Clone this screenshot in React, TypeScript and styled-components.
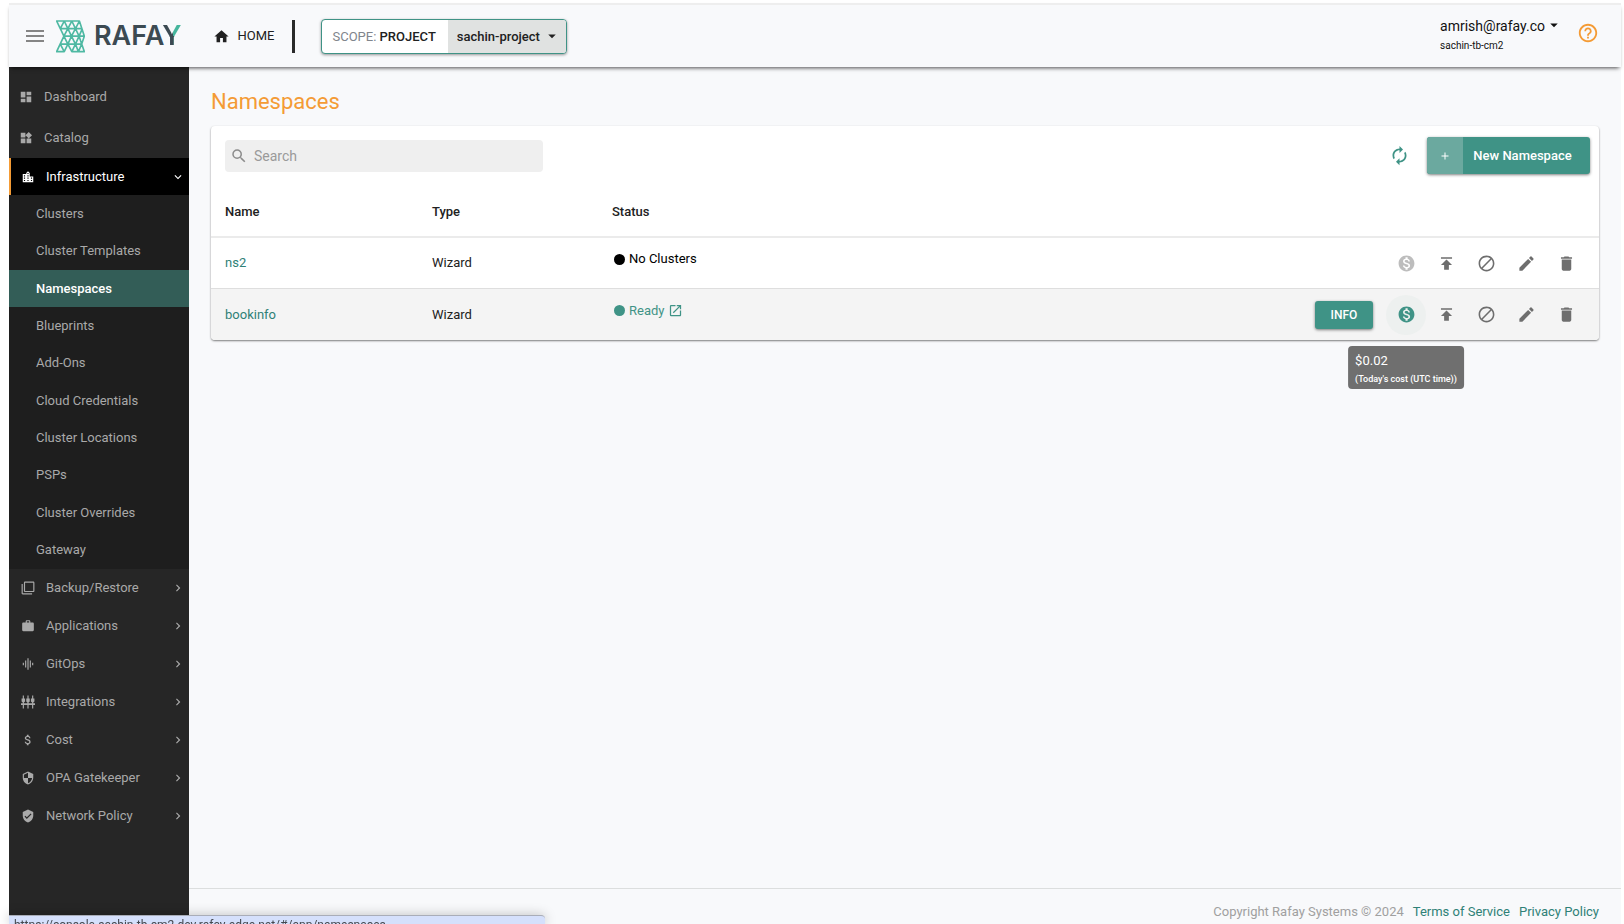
import React from "react";
import styled, { createGlobalStyle } from "styled-components";
import {
  MdDashboard, MdWidgets, MdLocationCity, MdFilterNone, MdWork, MdGraphicEq, MdAttachMoney,
  MdSecurity, MdVerifiedUser, MdHome, MdMenu, MdHelpOutline, MdAutorenew, MdSearch,
  MdMonetizationOn, MdPublish, MdBlock, MdEdit, MdDelete, MdArrowDropDown, MdChevronRight,
  MdExpandMore, MdAdd, MdOpenInNew,
} from "react-icons/md";

const teal = "#3f9386";
const orange = "#f49b35";

const GlobalStyle = createGlobalStyle`
  * { box-sizing: border-box; }
  body { margin: 0; background: #fff; font-family: Roboto, "Liberation Sans", sans-serif; font-size: 13px; line-height: 20px; color: #212121; }
  button, input, select { font: inherit; color: inherit; }
  a { text-decoration: none; }
  svg { display: block; flex: none; }
`;

const Page = styled.div`
  min-height: 100vh;
  padding: 3px 3px 0 9px;
  display: flex;
  flex-direction: column;
`;

const Header = styled.header`
  position: relative;
  z-index: 1;
  display: flex;
  align-items: center;
  height: 64px;
  padding: 0 22px 0 14px;
  background: #f8f9fb;
  border-top: 2px solid #eeeeee;
  box-shadow: 0 3px 4px -2px rgba(0, 0, 0, 0.7);
`;

const MenuButton = styled.button`
  display: flex;
  padding: 0;
  border: 0;
  background: none;
  color: #858585;
`;

const Brand = styled.a`
  display: flex;
  align-items: center;
  gap: 9px;
  margin-left: 9px;
  color: #3c4a52;
  font: 600 27px/32px Inter, sans-serif;
`;

const BrandTail = styled.span`
  color: transparent;
  background: linear-gradient(#3c4a52, #3c4a52) 0 100% / 100% 16px no-repeat,
    linear-gradient(90deg, #3c4a52 54%, #45b59c 54%);
  -webkit-background-clip: text;
  background-clip: text;
`;

const HomeLink = styled.a`
  display: flex;
  align-items: center;
  gap: 8px;
  margin-left: 31px;
  color: #212121;
`;

const Divider = styled.span`
  width: 3px;
  height: 33px;
  margin: 0 26px 0 18px;
  background: #2a2a2a;
`;

const Scope = styled.label`
  display: flex;
  height: 35px;
  overflow: hidden;
  border: 1px solid ${teal};
  border-radius: 4px;
  background: #fff;
  box-shadow: 0 1px 3px rgba(0, 0, 0, 0.4);
  line-height: 33px;
`;

const ScopeName = styled.span`
  padding: 0 12px 0 10px;
  color: #80858c;
  b { font-weight: 500; color: #212121; }
`;

const ScopePicker = styled.span`
  display: flex;
  align-items: center;
  padding-right: 5px;
  background: #e0e2e1;
`;

const ScopeSelect = styled.select`
  appearance: none;
  height: 33px;
  padding: 0 2px 0 9px;
  border: 0;
  background: transparent;
  font-weight: 500;
`;

const UserArea = styled.div`
  display: flex;
  align-items: flex-start;
  gap: 14px;
  margin-left: auto;
`;

const Account = styled.button`
  display: flex;
  align-items: flex-start;
  padding: 0;
  border: 0;
  background: none;
  text-align: left;
  font-size: 14px;
  color: #111;
`;

const AccountText = styled.span`
  display: flex;
  flex-direction: column;
  small { font-size: 10px; }
`;

const HelpLink = styled.a`
  padding-top: 6px;
  color: ${orange};
`;

const Body = styled.div`
  flex: 1;
  display: flex;
`;

const Sidebar = styled.nav`
  flex: none;
  width: 180px;
  padding-top: 9px;
  background: #262626;
`;

const NavLink = styled.a<{ $wide?: boolean; $open?: boolean }>`
  display: flex;
  align-items: center;
  gap: 11px;
  height: ${(p) => (p.$wide ? 41 : p.$open ? 37 : 38)}px;
  padding: 0 4px 0 ${(p) => (p.$wide || p.$open ? 10 : 12)}px;
  color: ${(p) => (p.$open ? "#fff" : "#a9a9a9")};
  background: ${(p) => (p.$open ? "#000" : "none")};
  border-left: ${(p) => (p.$open ? `2px solid ${orange}` : "0")};
  > :last-child:not(:nth-child(2)) { margin-left: auto; }
`;

const SubMenu = styled.ul`
  display: flex;
  flex-direction: column;
  justify-content: space-between;
  min-height: 374px;
  margin: 0;
  padding: 0 0 1px;
  list-style: none;
  background: #1e1e1e;
`;

const SubLink = styled.a<{ $active?: boolean }>`
  display: block;
  padding-left: 27px;
  line-height: 37px;
  color: ${(p) => (p.$active ? "#fff" : "#a9a9a9")};
  font-weight: ${(p) => (p.$active ? 500 : 400)};
  background: ${(p) => (p.$active ? "#335d57" : "none")};
`;

const Main = styled.div`
  flex: 1;
  min-width: 0;
  display: flex;
  flex-direction: column;
  background: #f8f9fb;
`;

const Content = styled.main`
  flex: 1;
  padding: 21px 22px;
`;

const Title = styled.h1`
  margin: 0 0 10px;
  font-size: 22px;
  line-height: 28px;
  font-weight: 400;
  color: ${orange};
`;

const Card = styled.section`
  border-radius: 4px;
  background: #fff;
  box-shadow: 0 1px 2px rgba(0, 0, 0, 0.5);
`;

const Toolbar = styled.div`
  display: flex;
  align-items: center;
  padding: 11px 9px 0 14px;
`;

const SearchBox = styled.label`
  display: flex;
  align-items: center;
  gap: 6px;
  width: 318px;
  height: 32px;
  padding: 0 5px;
  border-radius: 4px;
  background: #efefef;
  color: #8c8c8c;
`;

const SearchInput = styled.input`
  flex: 1;
  min-width: 0;
  padding: 0;
  border: 0;
  outline: 0;
  background: none;
  font-size: 14px;
  &::placeholder { color: #9a9a9a; opacity: 1; }
`;

const RefreshButton = styled.button`
  display: flex;
  margin: 0 17px 0 auto;
  padding: 0;
  border: 0;
  background: none;
  color: ${teal};
`;

const NewButton = styled.button`
  display: flex;
  align-items: stretch;
  height: 37px;
  padding: 0;
  overflow: hidden;
  border: 0;
  border-radius: 3px;
  background: ${teal};
  color: #fff;
  font-weight: 500;
  line-height: 37px;
  box-shadow: 0 1px 3px rgba(0, 0, 0, 0.5);
`;

const NewIcon = styled.span`
  display: flex;
  align-items: center;
  justify-content: center;
  width: 36px;
  background: #6ba99f;
`;

const NewLabel = styled.span`
  width: 127px;
  padding-right: 8px;
`;

const Table = styled.table`
  width: 100%;
  table-layout: fixed;
  border-collapse: separate;
  border-spacing: 0;
`;

const HeadCell = styled.th<{ $width?: number }>`
  width: ${(p) => (p.$width ? `${p.$width}px` : "auto")};
  height: 64px;
  padding: 28px 0 0 14px;
  text-align: left;
  vertical-align: top;
  font-weight: 500;
  border-bottom: 2px solid #ebebeb;
`;

const Row = styled.tr<{ $hover?: boolean }>`
  background: ${(p) => (p.$hover ? "#f4f4f4" : "#fff")};
`;

const Cell = styled.td`
  height: 51px;
  padding: 0 0 0 14px;
  tr:not(:last-child) > & { border-bottom: 1px solid #dedede; }
  tr:last-child > &:first-child { border-bottom-left-radius: 4px; }
  tr:last-child > &:last-child { border-bottom-right-radius: 4px; }
  a { color: #2f8177; }
`;

const Status = styled.span<{ $color: string }>`
  display: flex;
  align-items: center;
  gap: 4px;
  padding: 0 0 8px 2px;
  color: ${(p) => p.$color};
`;

const Dot = styled.i`
  width: 11px;
  height: 11px;
  border-radius: 50%;
  background: currentColor;
`;

const Actions = styled.div`
  display: flex;
  align-items: center;
  justify-content: flex-end;
  padding-right: 13px;
`;

const InfoButton = styled.button`
  width: 58px;
  height: 28px;
  margin-right: 13px;
  padding: 0;
  border: 0;
  border-radius: 3px;
  background: ${teal};
  color: #fff;
  font-size: 12px;
  font-weight: 500;
  box-shadow: 0 1px 3px rgba(0, 0, 0, 0.5);
`;

const IconButton = styled.button<{ $color?: string; $hover?: boolean }>`
  position: relative;
  display: flex;
  align-items: center;
  justify-content: center;
  width: 40px;
  height: 40px;
  padding: 0;
  border: 0;
  border-radius: 50%;
  background: ${(p) => (p.$hover ? "#edf0ef" : "none")};
  color: ${(p) => p.$color ?? "#6e6e6e"};
`;

const Tooltip = styled.span`
  position: absolute;
  top: 51px;
  left: 50%;
  transform: translateX(-50%);
  display: flex;
  flex-direction: column;
  padding: 5px 7px 2px;
  border-radius: 4px;
  background: #6f6f6f;
  color: #fff;
  font-size: 13px;
  line-height: 20px;
  text-align: left;
  white-space: nowrap;
  small { font-size: 9px; line-height: 16px; font-weight: 500; }
`;

const Footer = styled.footer`
  display: flex;
  justify-content: flex-end;
  gap: 9px;
  padding: 13px 22px 2px;
  border-top: 1px solid #dcdede;
  color: #a0a0a0;
  a { color: #2f8177; }
`;

const LinkPreview = styled.div`
  position: fixed;
  z-index: 2;
  left: 9px;
  bottom: 0;
  width: 536px;
  height: 9px;
  padding: 0 5px;
  overflow: hidden;
  border-top: 1px solid #a9adb8;
  border-top-right-radius: 4px;
  background: #d5e0fc;
  color: #45484f;
  font-size: 12px;
  line-height: 18px;
  white-space: nowrap;
  box-shadow: 0 0 12px rgba(0, 0, 0, 0.25);
`;

const LogoMark = () => (
  <svg width="29" height="33" viewBox="-2 -1 88 98" fill="none" stroke="#4fb9a3" strokeWidth="5" strokeLinejoin="round" aria-hidden="true">
    <path d="M0 1H69L84 47L76 71L84 94H46L34 71L23 94H0L22 47ZM11 24H78M22 47H84M11 71H76M0 1L11 24L23 1L34 24L46 1L57 24L69 1M22 47L34 24L45 47L57 24L68 47L78 24M22 47L34 71L45 47L57 71L68 47L76 71L66 94L57 71L46 94M11 71L23 94" />
  </svg>
);

const SlidersIcon = () => (
  <svg width="14" height="14" viewBox="0 0 24 24" fill="currentColor" aria-hidden="true">
    <path d="M3 1h2v5h2v5l-2 2v10H3V13l-2-2V6h2zM11 1h2v5h2v5l-2 2v10h-2V13l-2-2V6h2zM19 1h2v5h2v5l-2 2v10h-2V13l-2-2V6h2zM0 14h8v3H0zM8 14h8v3H8zM16 14h8v3h-8z" />
  </svg>
);

const subItems = [
  "Clusters", "Cluster Templates", "Namespaces", "Blueprints", "Add-Ons",
  "Cloud Credentials", "Cluster Locations", "PSPs", "Cluster Overrides", "Gateway",
];

const sections = [
  { label: "Backup/Restore", icon: <MdFilterNone size={14} /> },
  { label: "Applications", icon: <MdWork size={14} /> },
  { label: "GitOps", icon: <MdGraphicEq size={14} /> },
  { label: "Integrations", icon: <SlidersIcon /> },
  { label: "Cost", icon: <MdAttachMoney size={14} /> },
  { label: "OPA Gatekeeper", icon: <MdSecurity size={14} /> },
  { label: "Network Policy", icon: <MdVerifiedUser size={14} /> },
];

const rows = [
  { name: "ns2", type: "Wizard", ready: false },
  { name: "bookinfo", type: "Wizard", ready: true },
];

export default function App() {
  return (
    <Page>
      <GlobalStyle />
      <Header>
        <MenuButton aria-label="Toggle menu"><MdMenu size={24} /></MenuButton>
        <Brand href="#" aria-label="Rafay">
          <LogoMark />
          <span>RAFA<BrandTail>Y</BrandTail></span>
        </Brand>
        <HomeLink href="#"><MdHome size={17} />HOME</HomeLink>
        <Divider />
        <Scope>
          <ScopeName>SCOPE: <b>PROJECT</b></ScopeName>
          <ScopePicker>
            <ScopeSelect><option>sachin-project</option></ScopeSelect>
            <MdArrowDropDown size={18} />
          </ScopePicker>
        </Scope>
        <UserArea>
          <Account>
            <AccountText>amrish@rafay.co<small>sachin-tb-cm2</small></AccountText>
            <MdArrowDropDown size={18} />
          </Account>
          <HelpLink href="#" aria-label="Help"><MdHelpOutline size={22} /></HelpLink>
        </UserArea>
      </Header>
      <Body>
        <Sidebar>
          <NavLink href="#" $wide><MdDashboard size={14} /><span>Dashboard</span></NavLink>
          <NavLink href="#" $wide><MdWidgets size={14} /><span>Catalog</span></NavLink>
          <NavLink href="#" $open>
            <MdLocationCity size={14} /><span>Infrastructure</span><MdExpandMore size={14} />
          </NavLink>
          <SubMenu>
            {subItems.map((item) => (
              <li key={item}><SubLink href="#" $active={item === "Namespaces"}>{item}</SubLink></li>
            ))}
          </SubMenu>
          {sections.map((s) => (
            <NavLink key={s.label} href="#">{s.icon}<span>{s.label}</span><MdChevronRight size={14} /></NavLink>
          ))}
        </Sidebar>
        <Main>
          <Content>
            <Title>Namespaces</Title>
            <Card>
              <Toolbar>
                <SearchBox>
                  <MdSearch size={18} />
                  <SearchInput type="search" placeholder="Search" aria-label="Search" />
                </SearchBox>
                <RefreshButton aria-label="Refresh"><MdAutorenew size={21} /></RefreshButton>
                <NewButton>
                  <NewIcon><MdAdd size={12} /></NewIcon>
                  <NewLabel>New Namespace</NewLabel>
                </NewButton>
              </Toolbar>
              <Table>
                <thead>
                  <tr>
                    <HeadCell $width={207}>Name</HeadCell>
                    <HeadCell $width={180}>Type</HeadCell>
                    <HeadCell>Status</HeadCell>
                    <HeadCell $width={360} aria-label="Actions" />
                  </tr>
                </thead>
                <tbody>
                  {rows.map((r) => (
                    <Row key={r.name} $hover={r.ready}>
                      <Cell><a href="#">{r.name}</a></Cell>
                      <Cell>{r.type}</Cell>
                      <Cell>
                        <Status $color={r.ready ? teal : "#000"}>
                          <Dot />
                          {r.ready ? "Ready" : "No Clusters"}
                          {r.ready && <MdOpenInNew size={15} />}
                        </Status>
                      </Cell>
                      <Cell>
                        <Actions>
                          {r.ready && <InfoButton>INFO</InfoButton>}
                          <IconButton aria-label="Cost" $color={r.ready ? teal : "#bdbdbd"} $hover={r.ready}>
                            <MdMonetizationOn size={19} />
                            {r.ready && (
                              <Tooltip role="tooltip">$0.02<small>(Today's cost (UTC time))</small></Tooltip>
                            )}
                          </IconButton>
                          <IconButton aria-label="Publish"><MdPublish size={19} /></IconButton>
                          <IconButton aria-label="Unpublish"><MdBlock size={19} /></IconButton>
                          <IconButton aria-label="Edit"><MdEdit size={19} /></IconButton>
                          <IconButton aria-label="Delete"><MdDelete size={19} /></IconButton>
                        </Actions>
                      </Cell>
                    </Row>
                  ))}
                </tbody>
              </Table>
            </Card>
          </Content>
          <Footer>
            <span>Copyright Rafay Systems © 2024</span>
            <a href="#">Terms of Service</a>
            <a href="#">Privacy Policy</a>
          </Footer>
        </Main>
      </Body>
      <LinkPreview>https://console-sachin-tb-cm2.dev.rafay-edge.net/#/app/namespaces</LinkPreview>
    </Page>
  );
}
